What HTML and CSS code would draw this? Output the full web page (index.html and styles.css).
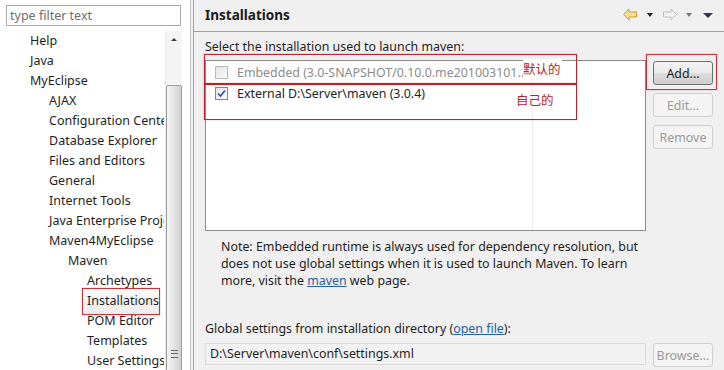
FILE: index.html
```html
<!DOCTYPE html>
<html>
<head>
    <meta charset="UTF-8">
    <title>Preferences - Installations</title>
    <link rel="stylesheet" href="styles.css">
</head>
<body>
    <div class="window">
        <aside class="sidebar">
            <input class="filter" type="text" placeholder="type filter text">
            <div class="tree-wrap">
                <ul class="tree">
                    <li class="lv1">Help</li>
                    <li class="lv1">Java</li>
                    <li class="lv1">MyEclipse</li>
                    <li class="lv2">AJAX</li>
                    <li class="lv2">Configuration Center</li>
                    <li class="lv2">Database Explorer</li>
                    <li class="lv2">Files and Editors</li>
                    <li class="lv2">General</li>
                    <li class="lv2">Internet Tools</li>
                    <li class="lv2">Java Enterprise Project</li>
                    <li class="lv2">Maven4MyEclipse</li>
                    <li class="lv3">Maven</li>
                    <li class="lv4">Archetypes</li>
                    <li class="lv4 selected"><span class="mark">Installations</span></li>
                    <li class="lv4">POM Editor</li>
                    <li class="lv4">Templates</li>
                    <li class="lv4">User Settings</li>
                </ul>
                <div class="scrollbar">
                    <div class="arrow-up"></div>
                    <div class="thumb"><span class="grip"></span></div>
                </div>
            </div>
        </aside>

        <main class="page">
            <div class="page-head">
                <h1>Installations</h1>
                <div class="nav-tools">
                    <svg class="back" width="14" height="13" viewBox="0 0 14 13">
                        <polygon points="0.5,6.5 6,1 6,4 13.5,4 13.5,9 6,9 6,12" fill="#fbdf8e" stroke="#c89a3c" stroke-width="1"/>
                    </svg>
                    <span class="drop dark"></span>
                    <svg class="forward" width="14" height="13" viewBox="0 0 14 13">
                        <polygon points="13.5,6.5 8,1 8,4 0.5,4 0.5,9 8,9 8,12" fill="#f2f2f2" stroke="#bdbdbd" stroke-width="1"/>
                    </svg>
                    <span class="drop grey"></span>
                    <span class="drop navy"></span>
                </div>
            </div>

            <div class="page-body">
                <p class="label">Select the installation used to launch maven:</p>

                <div class="install-row">
                    <div class="install-list">
                        <div class="item disabled">
                            <span class="check"></span>
                            <span class="name">Embedded (3.0-SNAPSHOT/0.10.0.me201003101..</span>
                        </div>
                        <div class="item">
                            <span class="check on">
                                <svg width="9" height="9" viewBox="0 0 9 9"><path d="M1 4.5 L3.5 7 L8 1.5" fill="none" stroke="#3b4f9c" stroke-width="1.6"/></svg>
                            </span>
                            <span class="name">External D:\Server\maven (3.0.4)</span>
                        </div>

                        <div class="note-box box-default"><span>默认的</span></div>
                        <div class="note-box box-own"><span>自己的</span></div>
                    </div>

                    <div class="buttons">
                        <button class="btn primary">Add...</button>
                        <button class="btn" disabled>Edit...</button>
                        <button class="btn" disabled>Remove</button>
                        <div class="add-mark"></div>
                    </div>
                </div>

                <p class="note">Note: Embedded runtime is always used for dependency resolution, but<br>
                does not use global settings when it is used to launch Maven. To learn<br>
                more, visit the <a href="#">maven</a> web page.</p>

                <p class="label global">Global settings from installation directory (<a href="#">open file</a>):</p>
                <div class="settings-row">
                    <div class="field">D:\Server\maven\conf\settings.xml</div>
                    <button class="btn" disabled>Browse...</button>
                </div>
            </div>
        </main>
    </div>
</body>
</html>
```

FILE: styles.css
```css
body {
    margin: 0;
    background-color: #f0f0f0;
    font-family: "Noto Sans", "Noto Sans CJK SC", sans-serif;
    font-size: 12.4px;
    color: #1e1e1e;
    overflow: hidden;
}
.window {
    display: flex;
    height: 370px;
}

/* left tree */
.sidebar {
    width: 191px;
    flex: none;
    background: white;
    border-right: 1px solid #c9c9c9;
    padding-top: 5px;
    box-sizing: border-box;
    overflow: hidden;
}
.filter {
    display: block;
    margin-left: 6px;
    width: 175px;
    height: 21px;
    box-sizing: border-box;
    border: 1px solid #a9a9a9;
    padding: 0 3px;
    font-family: inherit;
    font-size: 12.5px;
    color: #222;
}
.filter::placeholder {
    color: #6d6d6d;
}
.tree-wrap {
    display: flex;
    margin-top: 5px;
    height: 340px;
}
.tree {
    list-style: none;
    margin: 0;
    padding: 0;
    width: 164px;
    overflow: hidden;
}
.tree li {
    height: 20px;
    line-height: 20px;
    white-space: nowrap;
    font-size: 12.5px;
}
.tree .lv1 { padding-left: 30px; }
.tree .lv2 { padding-left: 49px; }
.tree .lv3 { padding-left: 68px; }
.tree .lv4 { padding-left: 87px; }
.tree .selected {
    padding-left: 82px;
}
.mark {
    display: inline-block;
    height: 25px;
    line-height: 24px;
    padding: 0 0 0 4px;
    margin-top: -3px;
    border: 1px solid #c8333a;
    background: linear-gradient(#fbfbfb, #ececec);
    box-shadow: 0 0 2px rgba(220, 60, 60, 0.35);
}
.scrollbar {
    width: 16px;
    margin-left: 1px;
    background: #f4f4f4;
    border-left: 1px solid #ececec;
    position: relative;
}
.arrow-up {
    width: 0;
    height: 0;
    margin: 7px auto 0;
    border-left: 3px solid transparent;
    border-right: 3px solid transparent;
    border-bottom: 3px solid #3c3c3c;
}
.thumb {
    position: absolute;
    top: 54px;
    left: 0;
    right: 0;
    bottom: -10px;
    border: 1px solid #9d9d9d;
    border-radius: 2px;
    background: linear-gradient(to right, #f4f4f4, #e0e0e0 60%, #cfcfcf);
}
.grip {
    position: absolute;
    left: 4px;
    bottom: 22px;
    width: 7px;
    height: 6px;
    border-top: 1px solid #666;
    border-bottom: 1px solid #666;
}
.grip::after {
    content: "";
    position: absolute;
    left: 0;
    right: 0;
    top: 2px;
    border-top: 1px solid #666;
}

/* right page */
.page {
    flex: 1;
    margin-left: 2px;
    border-left: 1px solid #a0a0a0;
}
.page-head {
    height: 32px;
    box-sizing: border-box;
    border-bottom: 1px solid #a0a0a0;
    display: flex;
    align-items: center;
    justify-content: space-between;
    padding: 0 11px 2px 11px;
}
.page-head h1 {
    margin: 0;
    font-size: 13.5px;
    font-weight: bold;
    color: #1a1a1a;
}
.nav-tools {
    display: flex;
    align-items: center;
}
.nav-tools svg {
    display: block;
}
.drop {
    width: 0;
    height: 0;
    border-left: 3.5px solid transparent;
    border-right: 3.5px solid transparent;
    border-top: 4px solid #1e1e1e;
}
.drop.dark { margin: 1px 10px 0 10px; }
.drop.grey { border-top-color: #7a7a7a; margin: 1px 0 0 9px; }
.drop.navy {
    border-top-color: #34345a;
    border-left-width: 5px;
    border-right-width: 5px;
    border-top-width: 5px;
    margin: 1px 0 0 11px;
}

.page-body {
    padding: 0 11px;
}
.label {
    margin: 7px 0 0;
    line-height: 16px;
}
.install-row {
    display: flex;
    gap: 7px;
    margin-top: 5px;
}
.install-list {
    flex: 1;
    height: 171px;
    border: 1px solid #8c8c8c;
    background: linear-gradient(to right, white 326px, #ededed 326px, #ededed 327px, white 327px);
    position: relative;
    padding-top: 1px;
    box-sizing: border-box;
}
.item {
    display: flex;
    align-items: center;
    height: 21px;
    padding-left: 9px;
}
.item .name {
    margin-left: 9px;
    width: 300px;
    white-space: nowrap;
    overflow: hidden;
}
.item.disabled .name {
    color: #8c8c8c;
}
.check {
    width: 13px;
    height: 13px;
    box-sizing: border-box;
    border: 1px solid #9a9a9a;
    background: linear-gradient(135deg, #e4e4e4, #fafafa);
    display: flex;
    align-items: center;
    justify-content: center;
}
.check.on {
    border-color: #7c84a8;
}
.item.disabled .check {
    border-color: #b8b8b8;
}

/* hand-drawn red notes over the list */
.note-box {
    position: absolute;
    left: -2px;
    width: 371px;
    border: 1px solid #b3252b;
    box-shadow: 0 0 2px rgba(230, 70, 70, 0.35);
    font-family: "Noto Sans CJK SC", sans-serif;
    color: #b3252b;
    font-size: 12.5px;
}
.note-box span {
    position: absolute;
}
.box-default {
    top: -7px;
    height: 28px;
    border-bottom-width: 2px;
}
.box-default span {
    left: 318px;
    top: 4px;
    background: white;
    padding-right: 1px;
}
.box-own {
    top: 22px;
    height: 36px;
    border-top: none;
}
.box-own span {
    left: 311px;
    top: 7px;
}

.buttons {
    width: 60px;
    display: flex;
    flex-direction: column;
    gap: 8px;
    padding-top: 1px;
    position: relative;
}
.btn {
    width: 60px;
    height: 24px;
    box-sizing: border-box;
    border: 1px solid #cfcfcf;
    border-radius: 3px;
    background: #f4f4f4;
    color: #9a9a9a;
    font-family: inherit;
    font-size: 12.4px;
    padding: 0;
}
.btn.primary {
    border-color: #707070;
    background: linear-gradient(#f2f2f2, #ebebeb 50%, #dcdcdc 51%, #cfcfcf);
    color: #1a1a1a;
}
.add-mark {
    position: absolute;
    top: -6px;
    left: -7px;
    width: 69px;
    height: 34px;
    border: 1px solid #c8333a;
    box-shadow: 0 0 2px rgba(230, 70, 70, 0.35);
}

.note {
    margin: 7px 0 0 16px;
    line-height: 17px;
}
a {
    color: #1f5fa8;
}
.label.global {
    margin-top: 32px;
}
.settings-row {
    display: flex;
    align-items: flex-start;
    gap: 7px;
    margin-top: 6px;
}
.field {
    flex: 1;
    height: 22px;
    box-sizing: border-box;
    border: 1px solid #dadada;
    background: #f2f2f2;
    padding-left: 4px;
    line-height: 20px;
}
```
